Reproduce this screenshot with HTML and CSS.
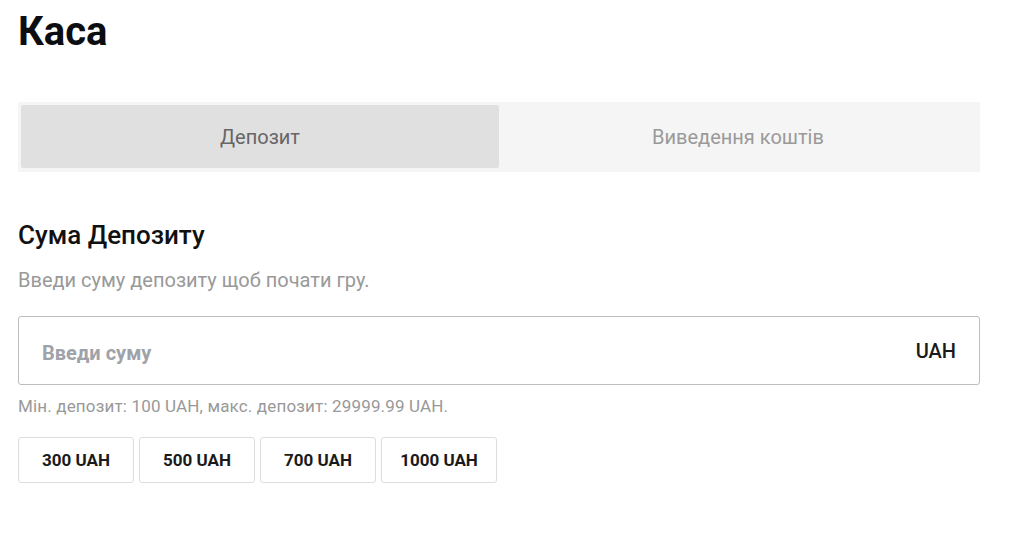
FILE: index.html
```html
<!DOCTYPE html>
<html lang="uk">
<head>
  <meta charset="UTF-8" />
  <meta name="viewport" content="width=device-width, initial-scale=1.0"/>
  <title>Каса</title>
  <link rel="stylesheet" href="styles.css">
</head>
<body>
  <div class="cashier">
    <h1 class="title">Каса</h1>

    <div class="tabs">
      <button class="tab active">Депозит</button>
      <button class="tab">Виведення коштів</button>
    </div>

    <h2 class="section-title">Сума Депозиту</h2>
    <p class="section-text">Введи суму депозиту щоб почати гру.</p>

    <div class="amount-field">
      <input class="amount-input" type="text" placeholder="Введи суму" />
      <span class="currency">UAH</span>
    </div>
    <div class="hint">Мін. депозит: 100 UAH, макс. депозит: 29999.99 UAH.</div>

    <div class="presets">
      <button class="preset">300 UAH</button>
      <button class="preset">500 UAH</button>
      <button class="preset">700 UAH</button>
      <button class="preset">1000 UAH</button>
    </div>
  </div>
</body>
</html>
```

FILE: styles.css
```css
* {
  box-sizing: border-box;
}

body {
  margin: 0;
  font-family: Roboto, 'Liberation Sans', sans-serif;
  background: #fff;
  color: #111;
}

.cashier {
  width: 962px;
  margin-left: 18px;
  padding-top: 8px;
}

.title {
  margin: 0;
  font-size: 40px;
  font-weight: 700;
  line-height: 48px;
  color: #0b0d10;
}

.tabs {
  display: flex;
  margin-top: 46px;
  padding: 3px 3px 4px;
  background: #f5f5f5;
}

.tab {
  flex: 1;
  height: 63px;
  border: none;
  border-radius: 2px;
  background: transparent;
  font-family: inherit;
  font-size: 20px;
  color: #9a9a9a;
  cursor: pointer;
}

.tab.active {
  background: #e0e0e0;
  color: #666;
}

.section-title {
  margin: 48px 0 0;
  font-size: 26px;
  font-weight: 500;
  line-height: 30px;
  color: #111;
}

.section-text {
  margin: 18px 0 0;
  font-size: 20px;
  line-height: 24px;
  color: #999;
}

.amount-field {
  display: flex;
  align-items: center;
  height: 69px;
  margin-top: 24px;
  padding: 0 23px;
  border: 1px solid #bdbdbd;
  border-radius: 3px;
}

.amount-input {
  flex: 1;
  padding: 5px 0 0;
  border: none;
  outline: none;
  font-family: inherit;
  font-size: 20px;
  font-weight: 700;
  color: #111;
}

.amount-input::placeholder {
  color: #a0a2aa;
}

.currency {
  font-size: 20px;
  font-weight: 500;
  color: #1a1a1a;
}

.hint {
  margin-top: 11px;
  font-size: 17px;
  line-height: 20px;
  letter-spacing: 0.16px;
  color: #999;
}

.presets {
  display: flex;
  gap: 5px;
  margin-top: 21px;
}

.preset {
  width: 116px;
  height: 46px;
  border: 1px solid #ddd;
  border-radius: 3px;
  background: #fff;
  font-family: inherit;
  font-size: 17px;
  font-weight: 700;
  color: #1a1a1a;
  cursor: pointer;
}
```
